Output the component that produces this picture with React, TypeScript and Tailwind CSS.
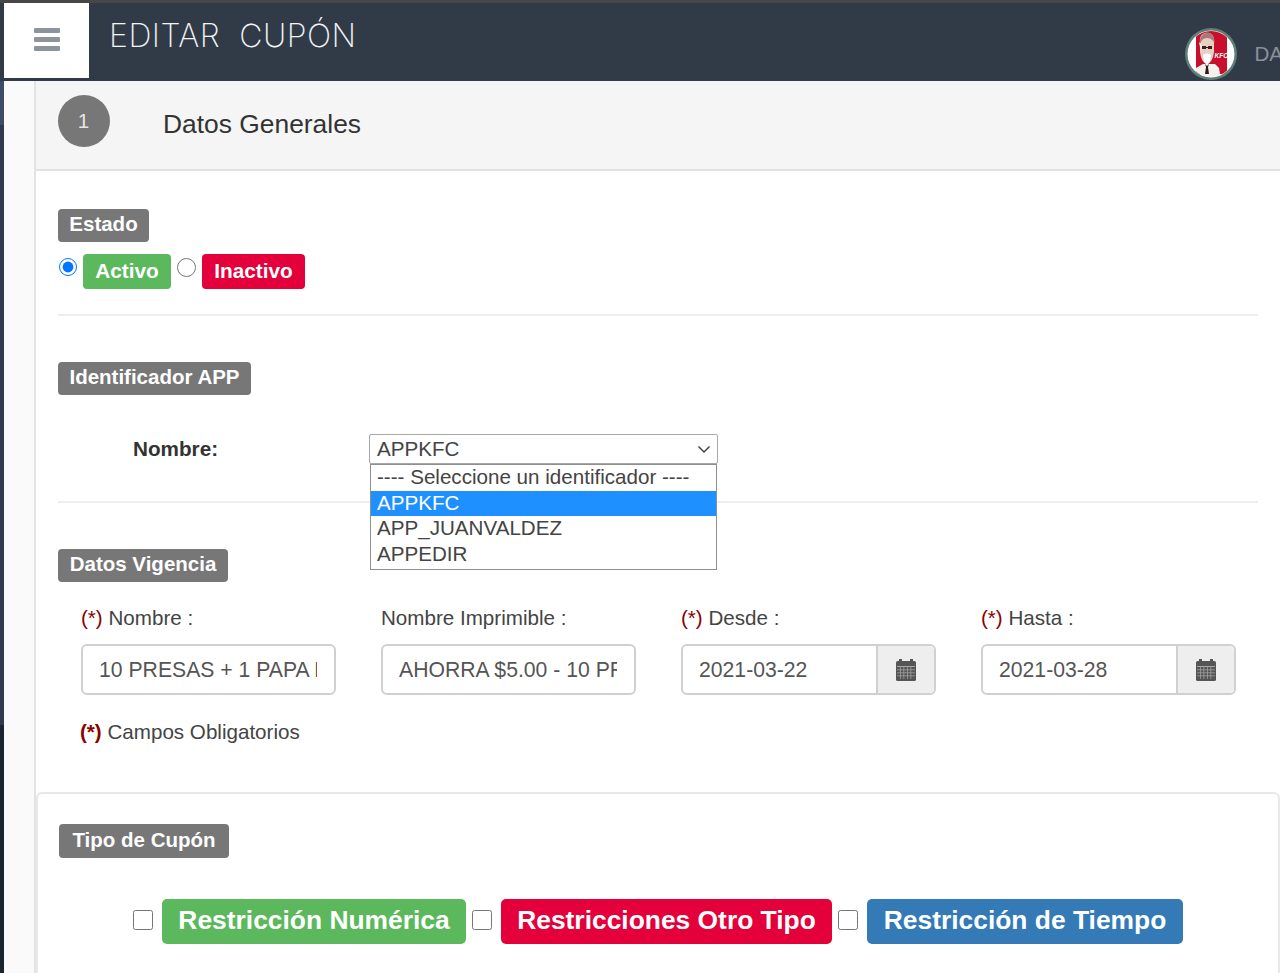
const Label = ({ children, cls }: { children: string; cls: string }) => (
  <span className={`flex items-center justify-center rounded-[4px] bg-[#777777] pb-[2px] text-[20.5px] font-bold leading-none text-white ${cls}`}>
    {children}
  </span>
);

const CalendarIcon = () => (
  <svg width="20" height="22" viewBox="0 0 20 22">
    <rect x="3" y="0" width="3" height="3" fill="#555" />
    <rect x="14" y="0" width="3" height="3" fill="#555" />
    <rect x="0" y="2" width="20" height="20" rx="1.5" fill="#555" />
    <g fill="#a8a8a8">
      <rect x="1" y="7" width="18" height="1" />
      <rect x="1" y="10.5" width="18" height="0.7" />
      <rect x="1" y="13.5" width="18" height="0.7" />
      <rect x="1" y="16.5" width="18" height="0.7" />
      <rect x="4" y="8" width="0.7" height="12" />
      <rect x="7.5" y="8" width="0.7" height="12" />
      <rect x="11" y="8" width="0.7" height="12" />
      <rect x="14.5" y="8" width="0.7" height="12" />
    </g>
  </svg>
);

const Avatar = () => (
  <svg width="52" height="52" viewBox="0 0 52 52" className="shrink-0">
    <defs>
      <clipPath id="face">
        <circle cx="26" cy="26" r="23" />
      </clipPath>
    </defs>
    <circle cx="26" cy="26" r="26" fill="#5d7f76" />
    <circle cx="26" cy="26" r="23.5" fill="#fff" />
    <g clipPath="url(#face)">
      <rect x="11" y="3" width="31" height="43" fill="#c8102e" />
      <path d="M9 52 L11 40 L18 36 L30 36 L34 40 L36 52 Z" fill="#f5f1ee" />
      <path d="M15 14 C14 6 20 4 24 5 C28 6 30 10 29 16 L29 24 C28 31 26 35 22 36 C18 35 16 31 15 24 Z" fill="#e8cfc0" />
      <path d="M15 16 C14 7 20 4 24 5 C28 6 30 10 29 14 C26 9 20 9 17 12 Z" fill="#a9787a" />
      <path d="M14 14 L16 24 L17 17 Z" fill="#f5f1ee" />
      <path d="M17 18 h4 v3 h-4 z M23 18 h4 v3 h-4 z M21 19 h2 v1 h-2 z" fill="#3a2222" />
      <path d="M18 27 C20 25 24 25 26 27 L25 33 C24 37 20 37 19 33 Z" fill="#fff" />
      <path d="M20 36 L22 38 L24 36 L23 39 L24 46 L20 46 L21 39 Z" fill="#2a1a1a" />
      <text x="29.5" y="30" fontSize="6.5" fontWeight="700" fontStyle="italic" fill="#fff" fontFamily="Liberation Sans, sans-serif">KFC</text>
    </g>
  </svg>
);

const DateField = ({ label, value }: { label: string; value: string }) => (
  <div>
    <p className="text-[20.6px] leading-[26px] text-[#444]">
      <span className="text-[#8b0000]">(*)</span> {label} :
    </p>
    <div className="mt-[13px] flex h-[51px] rounded-[6px] border-2 border-[#d0d0d0]">
      <input readOnly value={value} className="w-0 flex-1 rounded-l-[6px] bg-white pl-[16px] pr-[15px] text-[21.2px] text-[#555] outline-none" />
      <div className="flex w-[58px] items-center justify-center rounded-r-[5px] border-l-2 border-[#d0d0d0] bg-[#eeeeee]">
        <CalendarIcon />
      </div>
    </div>
  </div>
);

const TextField = ({ label, value, required }: { label: string; value: string; required?: boolean }) => (
  <div>
    <p className="text-[20.6px] leading-[26px] text-[#444]">
      {required && <span className="text-[#8b0000]">(*) </span>}
      {label} :
    </p>
    <input
      readOnly
      value={value}
      className="mt-[13px] h-[51px] w-full rounded-[6px] border-2 border-[#d0d0d0] bg-white pl-[16px] pr-[17px] text-[21.2px] text-[#555] outline-none"
    />
  </div>
);

const App = () => {
  return (
    <div className="relative flex h-[973px] w-[1280px] flex-col overflow-hidden bg-white font-['Liberation_Sans',Arial,sans-serif]">
      <div className="h-[3px] shrink-0 bg-[#474747]"></div>
      <header className="flex h-[78px] shrink-0 items-start overflow-hidden bg-[#313b48] pl-1">
        <div className="flex h-[75px] w-[85px] flex-col items-center justify-center gap-[4px] bg-white pb-[2px] pl-[1px]">
          <span className="h-[5px] w-[26px] rounded-[1px] bg-[#8d949c]"></span>
          <span className="h-[5px] w-[26px] rounded-[1px] bg-[#8d949c]"></span>
          <span className="h-[5px] w-[26px] rounded-[1px] bg-[#8d949c]"></span>
        </div>
        <h1 className="ml-[20px] mt-[13px] whitespace-pre font-['Inter',sans-serif] text-[32px] font-extralight leading-[40px] tracking-[0.5px] text-[#f2f4f5]">
          EDITAR  CUPÓN
        </h1>
        <div className="ml-auto mr-[-3px] mt-[25px] flex items-start">
          <Avatar />
          <span className="ml-[17px] mt-[13px] text-[20.6px] leading-[26px] text-[#8a9098]">DA</span>
        </div>
      </header>

      <div className="flex min-h-0 flex-1">
        <div className="flex w-1 flex-col">
          <div className="h-[44px] bg-[#3d4d68]"></div>
          <div className="h-[600px] bg-[#2f3b4c]"></div>
          <div className="flex-1 bg-[#1a2530]"></div>
        </div>
        <div className="w-[30px] bg-[#fafafa]"></div>
        <main className="relative flex-1 border-l-2 border-[#e3e3e3]">
          <div className="flex h-[90px] items-center border-b-2 border-[#e3e3e3] bg-[#f5f5f5] pb-[8px] pl-[22px]">
            <div className="flex h-[52px] w-[52px] items-center justify-center rounded-full bg-[#777777] pr-[1px] text-[20.6px] text-[#e6e6e6]">1</div>
            <h2 className="ml-[53px] mt-[5px] text-[26.4px] leading-[32px] text-[#333]">Datos Generales</h2>
          </div>

          <div className="px-[22px] pt-[38px]">
            <Label cls="h-[33px] w-[91px]">Estado</Label>
            <div className="mt-[12px] flex h-[35px] items-start">
              <input type="radio" readOnly checked name="estado" className="m-0 ml-px mt-[4px] h-[18px] w-[18px]" />
              <span className="ml-[6px] flex h-[35px] w-[88px] items-center justify-center rounded-[4px] bg-[#5cb85c] pb-[2px] text-[20.8px] font-bold text-white">Activo</span>
              <input type="radio" readOnly name="estado" className="m-0 ml-[6px] mt-[4px] h-[19px] w-[19px]" />
              <span className="ml-[6px] flex h-[35px] w-[103px] items-center justify-center rounded-[4px] bg-[#e4003a] pb-[2px] text-[20.8px] font-bold text-white">Inactivo</span>
            </div>
            <hr className="mt-[25px] w-[1200px] border-t-2 border-[#eeeeee]" />

            <Label cls="mt-[46px] h-[33px] w-[193px]">Identificador APP</Label>
            <div className="mt-[38px] flex items-center">
              <span className="ml-[75px] w-[236px] text-[20.7px] font-bold text-[#333]">Nombre:</span>
              <div className="relative">
                <div className="flex h-[30px] w-[349px] items-center justify-between rounded-[2px] border border-[#a8a8a8] bg-white pl-[7px] pr-[6px] pt-[1px] text-[20.6px] text-[#444]">
                  APPKFC
                  <svg width="14" height="9" viewBox="0 0 14 9" fill="none" stroke="#444" strokeWidth="1.5">
                    <path d="M1.5 1.5 L7 7 L12.5 1.5" />
                  </svg>
                </div>
                <ul className="absolute left-px top-[30px] z-10 h-[106px] w-[347px] border border-[#8f8f8f] bg-white text-[20.6px] leading-[23.5px] text-[#444]">
                  <li className="h-[26px] pl-[6px]">---- Seleccione un identificador ----</li>
                  <li className="h-[25px] bg-[#1e90ff] pl-[6px] text-white">APPKFC</li>
                  <li className="h-[26px] pl-[6px]">APP_JUANVALDEZ</li>
                  <li className="h-[26px] pl-[6px]">APPEDIR</li>
                </ul>
              </div>
            </div>
            <hr className="mt-[37px] w-[1200px] border-t-2 border-[#eeeeee]" />

            <Label cls="mt-[46px] h-[33px] w-[170px]">Datos Vigencia</Label>
            <div className="ml-[23px] mt-[23px] grid w-[1155px] grid-cols-4 gap-x-[45px]">
              <TextField required label="Nombre" value="10 PRESAS + 1 PAPA FRITA" />
              <TextField label="Nombre Imprimible" value="AHORRA $5.00 - 10 PRESAS" />
              <DateField label="Desde" value="2021-03-22" />
              <DateField label="Hasta" value="2021-03-28" />
            </div>
            <p className="ml-[22px] mt-[24px] text-[20.6px] leading-[26px] text-[#444]">
              <strong className="text-[#8b0000]">(*)</strong> Campos Obligatorios
            </p>
          </div>

          <section className="mt-[47px] h-[300px] rounded-t-[6px] border-2 border-[#e8e8e8] pl-[21px] pt-[30px]">
            <Label cls="h-[34px] w-[170px]">Tipo de Cupón</Label>
            <div className="ml-[74px] mt-[41px] flex items-center">
              <input type="checkbox" readOnly className="m-0 mb-[3px] h-[20px] w-[20px]" />
              <span className="ml-[9px] flex h-[45px] w-[304px] items-center justify-center rounded-[5px] bg-[#5cb85c] pb-[2px] text-[26.4px] font-bold text-white">Restricción Numérica</span>
              <input type="checkbox" readOnly className="m-0 mb-[3px] ml-[6px] h-[20px] w-[20px]" />
              <span className="ml-[9px] flex h-[45px] w-[331px] items-center justify-center rounded-[5px] bg-[#e4003a] pb-[2px] text-[26.4px] font-bold text-white">Restricciones Otro Tipo</span>
              <input type="checkbox" readOnly className="m-0 mb-[3px] ml-[6px] h-[20px] w-[20px]" />
              <span className="ml-[9px] flex h-[45px] w-[316px] items-center justify-center rounded-[5px] bg-[#337ab7] pb-[2px] text-[26.4px] font-bold text-white">Restricción de Tiempo</span>
            </div>
          </section>
        </main>
      </div>
    </div>
  );
};

export default App;
